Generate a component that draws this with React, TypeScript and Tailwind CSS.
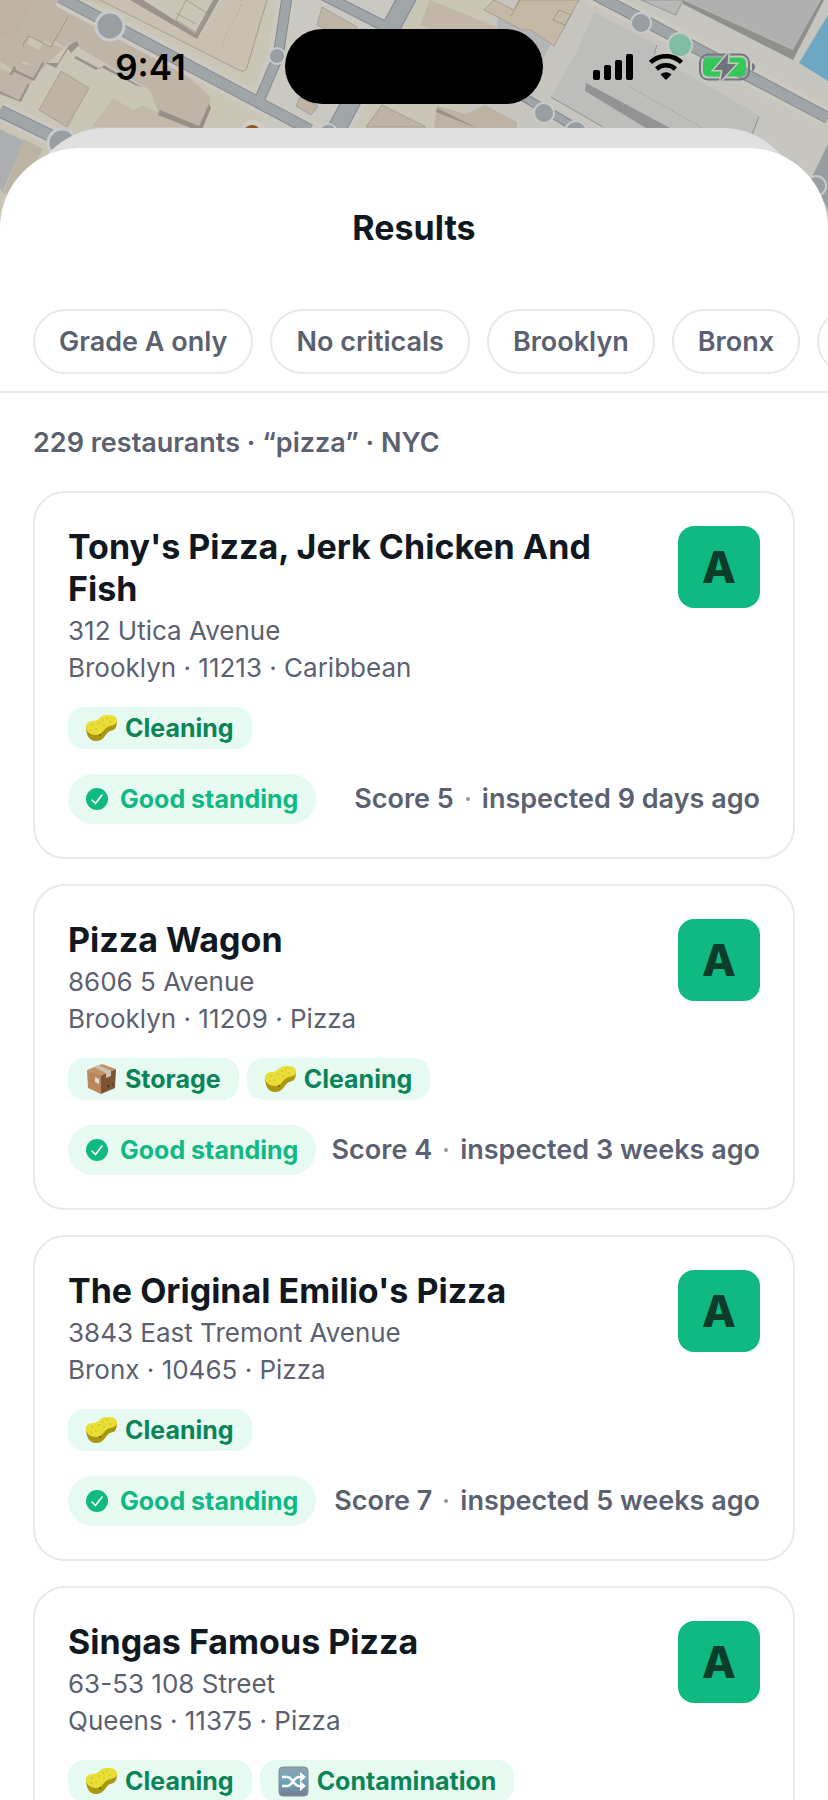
import { ReactNode } from "react";

type TagName = "Cleaning" | "Storage" | "Contamination";

type Restaurant = {
  name: string;
  address: string;
  details: string;
  tags: TagName[];
  score: number;
  inspected: string;
};

const filters = ["Grade A only", "No criticals", "Brooklyn", "Bronx", "Queens"];

const restaurants: Restaurant[] = [
  {
    name: "Tony's Pizza, Jerk Chicken And Fish",
    address: "312 Utica Avenue",
    details: "Brooklyn · 11213 · Caribbean",
    tags: ["Cleaning"],
    score: 5,
    inspected: "9 days ago",
  },
  {
    name: "Pizza Wagon",
    address: "8606 5 Avenue",
    details: "Brooklyn · 11209 · Pizza",
    tags: ["Storage", "Cleaning"],
    score: 4,
    inspected: "3 weeks ago",
  },
  {
    name: "The Original Emilio's Pizza",
    address: "3843 East Tremont Avenue",
    details: "Bronx · 10465 · Pizza",
    tags: ["Cleaning"],
    score: 7,
    inspected: "5 weeks ago",
  },
  {
    name: "Singas Famous Pizza",
    address: "63-53 108 Street",
    details: "Queens · 11375 · Pizza",
    tags: ["Cleaning", "Contamination"],
    score: 9,
    inspected: "6 weeks ago",
  },
];

function SpongeIcon() {
  return (
    <svg viewBox="0 0 31 28" className="h-7 w-[31px] shrink-0" aria-hidden="true">
      <path d="M0 12C0 19 2 27 10 27c9 0 9-8 14-10 5-1 7-3 7-11z" fill="#ab960f" />
      <path
        d="M0 13C0 8 4 7 8 7c5-.5 6-6 13-6 6 0 10 1 10 6 0 5-7 4-11 7-4 4-5 7-10 7-6 0-10-4-10-8z"
        fill="#e9de35"
      />
      <g fill="#d3c524">
        <circle cx="6" cy="11" r="1" />
        <circle cx="10" cy="15" r="1" />
        <circle cx="13" cy="9" r="1" />
        <circle cx="17" cy="6" r="1" />
        <circle cx="21" cy="4" r="1" />
        <circle cx="24" cy="8" r="1" />
        <circle cx="18" cy="11" r="1" />
        <circle cx="5" cy="16" r="1" />
      </g>
      <circle cx="14" cy="21" r="1" fill="#6e5f08" />
    </svg>
  );
}

function BoxIcon() {
  return (
    <svg viewBox="0 0 31 31" className="h-[31px] w-[31px] shrink-0" aria-hidden="true">
      <path d="M1 6 15 11v19L2 24z" fill="#b9875b" />
      <path d="M15 11 30 5l-1 19-14 6z" fill="#7d5534" />
      <path d="M1 6 16 0l14 5-15 7z" fill="#c2936a" />
      <path d="m8 3 4-2 13 6v5l-5 2V9z" fill="#cdc1b2" />
      <path d="m9 13 4 2v5l-4-2z" fill="#e4ded6" />
      <path d="m21 22 2-1v3zm5-2 1-1v3z" fill="#352416" />
    </svg>
  );
}

function ShuffleTileIcon() {
  return (
    <svg viewBox="0 0 31 31" className="h-[31px] w-[31px] shrink-0" aria-hidden="true">
      <defs>
        <linearGradient id="tile" x1="0" x2="0" y1="0" y2="1">
          <stop offset="0" stopColor="#8fa0ae" />
          <stop offset="0.45" stopColor="#6fa5c0" />
          <stop offset="1" stopColor="#747d8d" />
        </linearGradient>
      </defs>
      <rect x="1" y="1" width="29" height="29" rx="4" fill="url(#tile)" stroke="#858b99" />
      <path
        d="M4 11h5c6 0 6 9 12 9h3M4 20h5c6 0 6-9 12-9h3"
        fill="none"
        stroke="#fff"
        strokeWidth="2.6"
      />
      <path d="m22 6 6 5-6 5zm0 9 6 5-6 5z" fill="#fff" />
    </svg>
  );
}

const tagIcons: Record<TagName, ReactNode> = {
  Cleaning: <SpongeIcon />,
  Storage: <BoxIcon />,
  Contamination: <ShuffleTileIcon />,
};

function MapBackdrop() {
  return (
    <svg
      viewBox="0 0 828 260"
      preserveAspectRatio="xMidYMin slice"
      className="absolute inset-x-0 top-0 h-[260px] w-full"
      aria-hidden="true"
    >
      <rect width="828" height="260" fill="#c9c6b6" />
      <path d="M498 0h330v260H520l-60-130z" fill="#c7c5bf" />
      <path d="M290 0h125l-60 128H262z" fill="#c9c8c3" />

      {/* blocks left of the island */}
      <path d="M0 0h42L20 38l-8 4L0 36z" fill="#bdb2a3" />
      <path d="M36 0h20l120 66 34 30v9l-8 22-42-9-10-28-80-48-28 27-18-8-8 10L0 62V36l12 4z" fill="#bfb5a7" />
      <path d="m30 36 20 11 5-6 17 12-9 18 3-22-22-8-5 9-12-6z" fill="#c8c5b3" />
      <path d="m29 36 22 11 17-30M24 47l-1-3 6-8" fill="none" stroke="#9c9688" />
      <path d="m61 71 28 17-22 39-28-17z" fill="#beb3a5" stroke="#a9a193" />
      <path d="m43 57-9 8-20-2-2 10-12-5v23l21 10 9-16z" fill="#bfb5a7" />
      <path d="m9 75 5-9 2 2-4 7M21 102l8-16-1-3-9 17-19-9v3zm12-24 10-17 1 3-10 17-20-9v-3z" fill="#98948a" />
      <path d="m45 63 11 5 12-19 3 4 8-8-2-4-8 4-11 18zm31-7 24 13 4-4 38 22-7-2-34-18-5 3-22-12z" fill="#98948a" />
      <path d="m113 98 20 12 10-5 45 22H92z" fill="#c2b9a9" />
      <path d="m158 115 43 17 10-24-2-4-10 22-39-16z" fill="#959086" />
      <path d="M0 129l24 12-22 52-2-6z" fill="#acaeaf" />
      <path d="M24 139l19 10-25 45H3z" fill="#bdb3a3" />

      {/* blocks right of the island */}
      <path d="m430 0 68 28-12 22-66-25z" fill="#c1b6a7" />
      <path d="m498 12 54 30-16 30h-42z" fill="#b4b5b6" />
      <path d="m494 0 20 10 5-10h60l-25 46-23-16-9 0-38-20z" fill="#c4b9a5" stroke="#a69f8f" />
      <path d="m520 0-9 16M553 20l6-10 12 5-6 10z" fill="none" stroke="#a29a89" />
      <path d="m437 106 80 22h-83zM485 105l32 17v6h-80z" fill="#bdb3a3" />
      <path d="m437 108 40 20-3-1-38-15z" fill="#979286" />

      {/* street halos */}
      <g fill="none" stroke="#cccac0" strokeWidth="20">
        <path d="M60-3 310 130M0 111l70 34M287-3l-9 60-20 46M590-8l238 126" />
      </g>

      {/* buildings that reach up to the kerb */}
      <path d="M80 0h58l63 35 21-35h46l-20 68c-1 4-4 5-8 3L118 8z" fill="#c9c0b0" />
      <path d="M96-2l143 72c4 2 7 1 8-3L267 0" fill="none" stroke="#a39d8e" />
      <path d="m130 0 67 39 22-39h-6l-18 33-52-33z" fill="#99948a" />
      <path d="m186 0 21 13-10 20-21-13zM176 13l20 11" fill="none" stroke="#a99f90" />
      <path d="M242 0c-2 18-16 24-20 48" fill="none" stroke="#b4ac9e" strokeDasharray="2 2" />
      <path d="m322 7 35 20-8 12-32-14z" fill="#bfb5a5" stroke="#aaa293" />
      <path d="m300 97 18 9-7 9-15-9zM382 105l44 22h-60z" fill="#bfb4a4" stroke="#a59f92" />
      <path d="m594 12 63 33-3 10 106 61-9 22H620l-69-41 27-47z" fill="#bdbdbc" />
      <path d="m551 97 52 30M759 117l-8 20M657 45l-3 10" fill="none" stroke="#8f9296" />
      <path d="m586 83 84 45h-24l-61-37z" fill="#939393" />
      <path d="m630 87 92 52" fill="none" stroke="#a7a7a6" strokeDasharray="3 1" />
      <path d="m641 0 35 15 7-15z" fill="#b8b8b7" stroke="#939598" />
      <path d="M684 0h139l-29 50z" fill="#b0b0b0" />
      <path d="m683 0 110 50 28-50h3l-31 60L683 4z" fill="#8f8f8c" />
      <path d="m828 15-29 48 29 18z" fill="#6ea7c3" />
      <path d="m828 144-17 35 17 30z" fill="#989da2" />

      {/* streets */}
      <g fill="none" stroke="#848990">
        <path d="M60-3 310 130" strokeWidth="12" />
        <path d="m0 111 70 34" strokeWidth="13" />
        <path d="m287-3-9 60-20 46" strokeWidth="11" />
        <path d="m323-5 65 33" strokeWidth="11" />
        <path d="m410-8-76 142" strokeWidth="19" />
        <path d="m590-8 238 126" strokeWidth="12" />
        <path d="m520 95 60 35" strokeWidth="9" />
      </g>
      <g fill="none" stroke="#a0a5a8">
        <path d="M60-3 310 130" strokeWidth="10" />
        <path d="m0 111 70 34" strokeWidth="11" />
        <path d="m287-3-9 60-20 46" strokeWidth="9" />
        <path d="m323-5 65 33" strokeWidth="9" />
        <path d="m410-8-76 142" strokeWidth="17" />
        <path d="m590-8 238 126" strokeWidth="10" />
        <path d="m520 95 60 35" strokeWidth="7" />
      </g>

      {/* stops and pins */}
      <g fill="#999ea2" stroke="#c9cacb" strokeWidth="2">
        <circle cx="110" cy="26" r="14" strokeWidth="3" />
        <circle cx="62" cy="143" r="14" strokeWidth="3" />
        <circle cx="277" cy="56" r="8" />
        <circle cx="328" cy="133" r="9" />
        <circle cx="544" cy="113" r="10" />
        <circle cx="576" cy="132" r="11" />
        <circle cx="641" cy="23" r="10" />
        <circle cx="816" cy="186" r="10" />
        <circle cx="680" cy="45" r="12" fill="#80bda4" />
      </g>
      <circle cx="253" cy="134" r="14" fill="#cfcdc8" />
      <circle cx="252" cy="134" r="9" fill="#8e5520" />
    </svg>
  );
}

function StatusBar() {
  return (
    <div className="relative grid h-[128px] grid-cols-[1fr_258px_1fr] items-start pt-[29px]">
      <div className="flex h-[75px] items-center justify-center pl-4">
        <time className="text-[35px] leading-[42px] font-semibold text-black">9:41</time>
      </div>
      <div className="h-[75px] rounded-full bg-black" />
      <div className="flex h-[75px] items-center justify-end gap-4 pr-[73px]">
        <svg viewBox="0 0 40 26" className="h-[26px] w-10" aria-label="Signal">
          <rect x="0" y="16" width="7" height="10" rx="2" />
          <rect x="11" y="11" width="7" height="15" rx="2" />
          <rect x="22" y="6" width="7" height="20" rx="2" />
          <rect x="33" y="0" width="7" height="26" rx="2" />
        </svg>
        <svg viewBox="0 0 34 26" className="h-[26px] w-[34px]" aria-label="Wi-Fi">
          <path d="M1.500 8.500C10 0 24 0 32.500 8.500M7.500 15c5.500-5 13.500-5 19 0" fill="none" stroke="#000" strokeWidth="4.500" />
          <path d="m17 26-5.500-5.500c3-3 8-3 11 0z" />
        </svg>
        <svg viewBox="0 0 56 28" className="h-7 w-14" aria-label="Battery charging">
          <rect x="1" y="1.500" width="49" height="25" rx="8" fill="none" stroke="#73777f" strokeWidth="2" />
          <path d="M53 10c4 1 4 7 0 8z" fill="#73777f" />
          <rect x="4" y="4.500" width="43" height="19" rx="5" fill="#34c759" />
          <path
            d="M29.500 0 15 17h8.500L21.500 28 37 11h-8.500z"
            fill="#70757b"
            stroke="#c6c8c3"
            strokeWidth="3"
            paintOrder="stroke"
          />
        </svg>
      </div>
    </div>
  );
}

function RestaurantCard({ restaurant }: { restaurant: Restaurant }) {
  return (
    <li className="rounded-[32px] border-2 border-[#e8e8ed] bg-white px-[33px] py-[33px]">
      <div className="flex items-start justify-between gap-12">
        <div className="min-w-0">
          <h2 className="text-[34px] leading-[42px] font-bold text-[#11181f]">{restaurant.name}</h2>
          <div className="mt-0.5 text-[26px] leading-[37px] text-[#5b6170]">
            <p>{restaurant.address}</p>
            <p>{restaurant.details}</p>
          </div>
        </div>
        <div className="flex h-[82px] w-[82px] shrink-0 items-center justify-center rounded-2xl bg-[#10b981] text-[44px] leading-[48px] font-extrabold text-[#0b3d2a]">
          A
        </div>
      </div>
      <ul className="flex flex-wrap gap-2 pt-[21px]">
        {restaurant.tags.map((tag) => (
          <li
            key={tag}
            className="flex h-[42px] items-center gap-2 rounded-2xl bg-[#e6faf2] px-[18px] text-[25px] leading-8 font-bold text-[#0b8457]"
          >
            {tagIcons[tag]}
            {tag}
          </li>
        ))}
      </ul>
      <div className="mt-[25px] flex items-center justify-between">
        <div className="flex h-[50px] items-center gap-3 rounded-full bg-[#e6faf2] px-[18px] text-[25px] leading-8 font-bold text-[#10b981]">
          <svg viewBox="0 0 22 22" className="h-[22px] w-[22px]" aria-hidden="true">
            <circle cx="11" cy="11" r="11" fill="#10b981" />
            <path d="m6 12 3.500 3.500L16 7" fill="none" stroke="#fff" strokeWidth="1.600" strokeLinecap="round" />
          </svg>
          Good standing
        </div>
        <div className="flex items-center gap-3 text-[27px] leading-8 font-semibold whitespace-nowrap text-[#5b6170]">
          <span>Score {restaurant.score}</span>
          <span className="h-1 w-1 rounded-full bg-[#9297a1]" />
          <span>inspected {restaurant.inspected}</span>
        </div>
      </div>
    </li>
  );
}

export default function App() {
  return (
    <div className="relative flex h-screen flex-col overflow-hidden bg-white font-[Inter,sans-serif]">
      <MapBackdrop />
      <StatusBar />
      <div className="relative mx-7 h-5 shrink-0">
        <div className="absolute inset-x-0 top-0 h-20 rounded-t-[78px] bg-[#e0e0e0]" />
      </div>
      <main className="relative flex min-h-0 flex-1 flex-col rounded-t-[80px] bg-white">
        <h1 className="pt-[59px] text-center text-[34px] leading-[42px] font-bold text-[#11181f]">Results</h1>
        <div className="mt-[60px] flex shrink-0 gap-[17px] overflow-hidden border-b-2 border-[#e8e8ed] pb-[17px] pl-[33px]">
          {filters.map((filter) => (
            <button
              key={filter}
              type="button"
              className="h-[65px] shrink-0 rounded-full border-2 border-[#e8e8ed] px-6 text-[27px] leading-8 font-semibold text-[#5b6170]"
            >
              {filter}
            </button>
          ))}
        </div>
        <div className="min-h-0 flex-1 overflow-y-auto px-[33px] [scrollbar-width:none]">
          <p className="pt-8 text-[27px] leading-9 font-semibold text-[#5b6170]">229 restaurants · “pizza” · NYC</p>
          <ul className="mt-[30px] flex flex-col gap-[25px] pb-8">
            {restaurants.map((restaurant) => (
              <RestaurantCard key={restaurant.name} restaurant={restaurant} />
            ))}
          </ul>
        </div>
      </main>
    </div>
  );
}
